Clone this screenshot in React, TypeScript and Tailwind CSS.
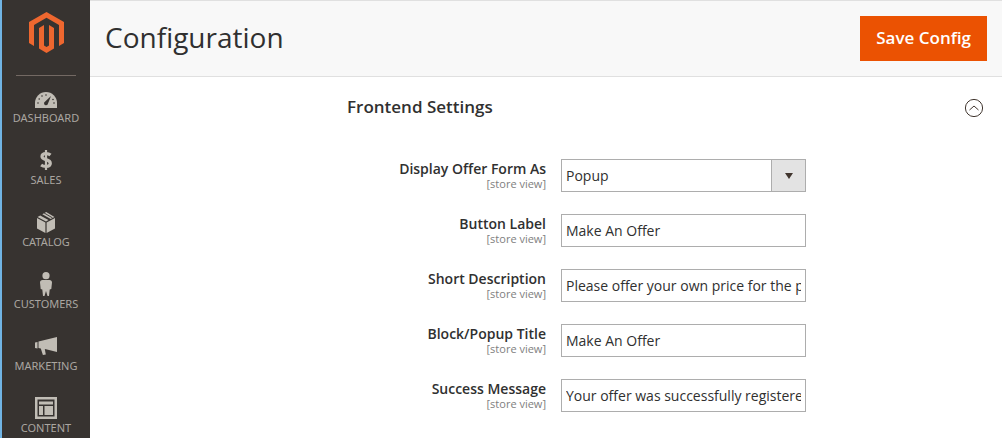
import type { ReactNode } from "react";

type MenuItem = { label: string; icon: ReactNode };
type Field = { id: string; label: string; value: string; options?: string[] };

const Logo = () => (
  <svg viewBox="0 0 35 41" className="w-[35px] h-[41px]" fill="#ee672f" aria-hidden="true">
    <path d="M17.5 0 35 10v21l-5 2.900V13L17.500 5.700 5 13v20.900L0 31V10z" />
    <path d="M10 16l5-3v20.400l2.500 1.500 2.500-1.500V13l5 3v20.500L17.500 41 10 36.500z" />
  </svg>
);

const DashboardIcon = () => (
  <svg viewBox="0 -4 22 20" className="w-[22px] h-5" aria-hidden="true">
    <path d="M0 16v-5a11 11 0 0 1 22 0v5z" fill="currentColor" />
    <g fill="#373330">
      <circle cx="3" cy="11" r="0.800" />
      <circle cx="4.200" cy="7" r="0.800" />
      <circle cx="7" cy="4" r="0.800" />
      <circle cx="11" cy="3" r="0.800" />
      <circle cx="18" cy="7.500" r="0.800" />
      <circle cx="19" cy="11" r="0.800" />
      <path d="M16 4 13 11.500a2 2 0 1 1-2.800-2z" />
    </g>
  </svg>
);

const SalesIcon = () => (
  <svg viewBox="0 0 12 20" className="w-3 h-5" fill="none" stroke="currentColor" aria-hidden="true">
    <path d="M10.500 5C9.300 4 7.800 3.600 6 3.600c-2.400 0-4 1-4 2.900C2 10.600 10.300 8.700 10.300 13.300c0 2-1.700 3.100-4.300 3.100-1.900 0-3.600-.500-4.900-1.500" strokeWidth="3.200" />
    <path d="M6 0v20" strokeWidth="2.200" />
  </svg>
);

const CatalogIcon = () => (
  <svg viewBox="0 0 18 21" className="w-[18px] h-[21px]" fill="currentColor" aria-hidden="true">
    <path d="M0 6 8.400 10.500V21L0 16.600zM18 6 9.600 10.500V21l8.400-4.400z" />
    <path d="M.500 4.900 3.200 3.400 11.500 8 9 9.400zM5.300 2.300 9.200 0l8.300 4.900-3.800 2.100z" />
    <path d="m7 .900 8.500 5" stroke="#373330" strokeWidth=".900" />
  </svg>
);

const CustomersIcon = () => (
  <svg viewBox="0 0 12 24" className="w-3 h-6" fill="currentColor" aria-hidden="true">
    <circle cx="6" cy="3.700" r="3.600" />
    <path d="M2.500 8h7C11 8 12 9 12 10.500L11.300 17l-1.600.5L9 24H7.500L6 19l-1.500 5H3l-.7-6.500L.7 17 0 10.500C0 9 1 8 2.500 8z" />
  </svg>
);

const MarketingIcon = () => (
  <svg viewBox="0 0 22 18" className="w-[22px] h-[18px]" fill="currentColor" aria-hidden="true">
    <path d="M0 5.500 2.500 5v6.500L0 11zM3.500 4.500 22 0v15L11 12.300 9.800 12l1 5.500-2.900.5-2.100-6.500-2.300-.5z" />
  </svg>
);

const ContentIcon = () => (
  <svg viewBox="0 0 22 22" className="w-[22px] h-[22px]" aria-hidden="true">
    <path d="M1.250 1.250h19.500v19.500H1.250z" fill="none" stroke="currentColor" strokeWidth="2.500" />
    <path d="M4 4.500h14v3H4zM4 9h4v9H4zM9.500 9H18v9H9.500z" fill="currentColor" />
  </svg>
);

const menu: MenuItem[] = [
  { label: "DASHBOARD", icon: <DashboardIcon /> },
  { label: "SALES", icon: <SalesIcon /> },
  { label: "CATALOG", icon: <CatalogIcon /> },
  { label: "CUSTOMERS", icon: <CustomersIcon /> },
  { label: "MARKETING", icon: <MarketingIcon /> },
  { label: "CONTENT", icon: <ContentIcon /> },
];

const fields: Field[] = [
  { id: "display", label: "Display Offer Form As", value: "Popup", options: ["Popup", "Block"] },
  { id: "button", label: "Button Label", value: "Make An Offer" },
  { id: "description", label: "Short Description", value: "Please offer your own price for the product" },
  { id: "title", label: "Block/Popup Title", value: "Make An Offer" },
  { id: "success", label: "Success Message", value: "Your offer was successfully registered" },
];

function Sidebar() {
  return (
    <aside className="w-[90px] shrink-0 border-l-2 border-[#70b4e4] bg-[#373330]">
      <div className="mx-[14px] flex h-[76px] justify-center border-b border-[#736963] pt-3">
        <a href="#" aria-label="Home" className="h-[41px]">
          <Logo />
        </a>
      </div>
      <nav>
        {menu.map((item) => (
          <a key={item.label} href="#" className="flex h-[62px] flex-col items-center gap-[2px] pt-[10px] text-[#aaa6a0]">
            <span className="flex h-6 shrink-0 items-center text-[#c1bdb5]">{item.icon}</span>
            <span className="font-['Noto_Sans','Open_Sans',sans-serif] text-[11px] leading-3">{item.label}</span>
          </a>
        ))}
      </nav>
    </aside>
  );
}

function FieldRow({ field }: { field: Field }) {
  return (
    <div className="grid grid-cols-[199fr_245fr_163fr] gap-x-[15px]">
      <label htmlFor={field.id} className="flex flex-col text-right text-[#303030]">
        <span className="text-sm leading-[19px] font-semibold whitespace-nowrap">{field.label}</span>
        <span className="text-[11px] leading-3 text-[#808080]">[store view]</span>
      </label>
      {field.options ? (
        <div className="relative">
          <select
            id={field.id}
            defaultValue={field.value}
            className="h-[33px] w-full appearance-none border border-[#adadad] bg-white px-1 text-sm text-[#303030]"
          >
            {field.options.map((option) => (
              <option key={option}>{option}</option>
            ))}
          </select>
          <span className="pointer-events-none absolute top-0 right-0 flex h-[33px] w-[35px] items-center justify-center border border-[#adadad] bg-[#e3e3e3]">
            <svg viewBox="0 0 8 6" className="h-[6px] w-2" fill="#41362f" aria-hidden="true">
              <path d="M0 0h8L4 6z" />
            </svg>
          </span>
        </div>
      ) : (
        <input
          id={field.id}
          type="text"
          defaultValue={field.value}
          className="h-[33px] w-full border border-[#adadad] bg-white px-1 text-sm text-[#303030]"
        />
      )}
    </div>
  );
}

export default function App() {
  return (
    <div className="flex h-screen overflow-hidden bg-white font-['Open_Sans','Noto_Sans',sans-serif] text-[#303030]">
      <Sidebar />
      <div className="min-w-0 flex-1">
        <header className="flex h-[77px] items-start justify-between border-y border-[#e0e0e0] bg-[#f8f8f8] px-[15px] pt-[15px]">
          <h1 className="text-[28px] leading-[42px]">Configuration</h1>
          <button type="button" className="h-[45px] bg-[#eb5202] px-4 pb-[2px] text-[17px] font-semibold text-white">
            Save Config
          </button>
        </header>
        <main className="pt-[18px] pr-[18px] pl-[257px]">
          <div className="flex h-6 items-center justify-between">
            <h2 className="text-[17px] font-semibold">Frontend Settings</h2>
            <button type="button" aria-label="Collapse section">
              <svg viewBox="0 0 20 20" className="h-5 w-5" fill="none" stroke="#41362f" aria-hidden="true">
                <circle cx="10" cy="11" r="8.600" />
                <path d="m5.500 13 4.500-4 4.500 4" />
              </svg>
            </button>
          </div>
          <form className="mt-10 flex flex-col gap-[22px]">
            {fields.map((field) => (
              <FieldRow key={field.id} field={field} />
            ))}
          </form>
        </main>
      </div>
    </div>
  );
}
